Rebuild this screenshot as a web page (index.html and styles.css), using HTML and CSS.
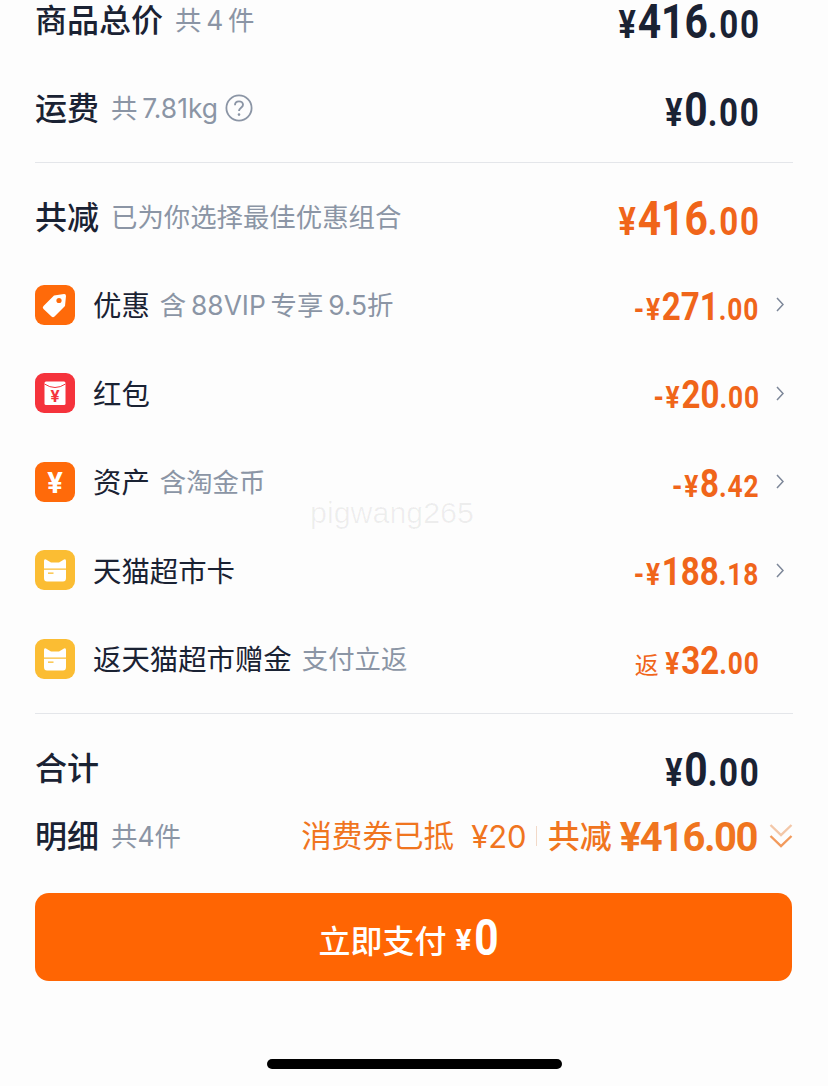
FILE: index.html
```html
<!DOCTYPE html>
<html lang="zh-CN">
<head>
    <meta charset="UTF-8">
    <meta name="viewport" content="width=device-width, initial-scale=1.0">
    <title>确认订单</title>
    <link rel="stylesheet" href="styles.css">
</head>
<body>
    <div class="page">
        <div class="row">
            <div class="left"><span class="title">商品总价</span><span class="sub">共&thinsp;4&thinsp;件</span></div>
            <div class="amount big"><span class="yen">¥</span><span class="int">416</span><span class="dec">.00</span></div>
            <div class="tail"></div>
        </div>
        <div class="row">
            <div class="left">
                <span class="title">运费</span><span class="sub">共&thinsp;7.81kg</span>
                <svg class="help" viewBox="0 0 28 28"><circle cx="14" cy="14" r="12.600" fill="none" stroke="#8b95a5" stroke-width="1.800"/><path d="M10 11.200c0-2.400 1.800-3.800 4-3.800s4 1.400 4 3.400c0 3-4 3-4 6.200" fill="none" stroke="#8b95a5" stroke-width="1.900"/><circle cx="14" cy="20.600" r="1.300" fill="#8b95a5"/></svg>
            </div>
            <div class="amount big"><span class="yen">¥</span><span class="int">0</span><span class="dec">.00</span></div>
            <div class="tail"></div>
        </div>

        <div class="divider"></div>

        <div class="row">
            <div class="left"><span class="title">共减</span><span class="sub">已为你选择最佳优惠组合</span></div>
            <div class="amount big orange"><span class="yen">¥</span><span class="int">416</span><span class="dec">.00</span></div>
            <div class="tail"></div>
        </div>

        <div class="row item">
            <div class="left">
                <svg class="icon" viewBox="0 0 40 40"><rect width="40" height="40" rx="9" fill="#ff6a0a"/><path d="M19 10.500L29 9Q31 8.800 31 11L30 21L19.500 31.500Q18 33 16.500 31.500L8.500 24Q7 22.500 8.500 21Z" fill="#fff"/><circle cx="24" cy="15.500" r="2.600" fill="#ff6a0a"/></svg>
                <span class="name">优惠</span><span class="sub">含&thinsp;88VIP&thinsp;专享&thinsp;9.5折</span>
            </div>
            <div class="amount orange"><span class="yen">-¥</span><span class="int">271</span><span class="dec">.00</span></div>
            <div class="tail"><svg class="arrow" viewBox="0 0 8 15"><path d="M1 1l6 6.500-6 6.500" fill="none" stroke="#7d8799" stroke-width="1.500"/></svg></div>
        </div>
        <div class="row item">
            <div class="left">
                <svg class="icon" viewBox="0 0 40 40"><rect width="40" height="40" rx="9" fill="#f5333c"/><rect x="9.500" y="8.500" width="21" height="23.500" rx="1.500" fill="#fff"/><path d="M9.500 11Q20 18 30.500 11" fill="none" stroke="#f5333c" stroke-width="1"/><text class="icon-yen" x="20" y="28.500" font-size="17">¥</text></svg>
                <span class="name">红包</span>
            </div>
            <div class="amount orange"><span class="yen">-¥</span><span class="int">20</span><span class="dec">.00</span></div>
            <div class="tail"><svg class="arrow" viewBox="0 0 8 15"><path d="M1 1l6 6.500-6 6.500" fill="none" stroke="#7d8799" stroke-width="1.500"/></svg></div>
        </div>
        <div class="row item">
            <div class="left">
                <svg class="icon" viewBox="0 0 40 40"><rect width="40" height="40" rx="9" fill="#ff6a0a"/><text class="icon-yen white" x="20" y="30.500" font-size="29">¥</text></svg>
                <span class="name">资产</span><span class="sub">含淘金币</span>
            </div>
            <div class="amount orange"><span class="yen">-¥</span><span class="int">8</span><span class="dec">.42</span></div>
            <div class="tail"><svg class="arrow" viewBox="0 0 8 15"><path d="M1 1l6 6.500-6 6.500" fill="none" stroke="#7d8799" stroke-width="1.500"/></svg></div>
        </div>
        <div class="row item">
            <div class="left">
                <svg class="icon" viewBox="0 0 40 40"><rect width="40" height="40" rx="9" fill="#fbbd33"/><path d="M9 11Q9 8.500 11 9.500L16 12.500H24L29 9.500Q31 8.500 31 11V18.500H9Z" fill="#fff"/><path d="M9 19.800H31V28Q31 31.500 28 31.500H12Q9 31.500 9 28Z" fill="#fff"/><rect x="13" y="22.500" width="5.500" height="1.300" fill="#fbbd33"/></svg>
                <span class="name">天猫超市卡</span>
            </div>
            <div class="amount orange"><span class="yen">-¥</span><span class="int">188</span><span class="dec">.18</span></div>
            <div class="tail"><svg class="arrow" viewBox="0 0 8 15"><path d="M1 1l6 6.500-6 6.500" fill="none" stroke="#7d8799" stroke-width="1.500"/></svg></div>
        </div>
        <div class="row item">
            <div class="left">
                <svg class="icon" viewBox="0 0 40 40"><rect width="40" height="40" rx="9" fill="#fbbd33"/><path d="M9 11Q9 8.500 11 9.500L16 12.500H24L29 9.500Q31 8.500 31 11V18.500H9Z" fill="#fff"/><path d="M9 19.800H31V28Q31 31.500 28 31.500H12Q9 31.500 9 28Z" fill="#fff"/><rect x="13" y="22.500" width="5.500" height="1.300" fill="#fbbd33"/></svg>
                <span class="name">返天猫超市赠金</span><span class="sub">支付立返</span>
            </div>
            <div class="amount orange"><span class="fan">返</span><span class="yen">¥</span><span class="int">32</span><span class="dec">.00</span></div>
            <div class="tail"></div>
        </div>

        <div class="divider"></div>

        <div class="row total">
            <div class="left"><span class="title">合计</span></div>
            <div class="amount big"><span class="yen">¥</span><span class="int">0</span><span class="dec">.00</span></div>
            <div class="tail"></div>
        </div>
        <div class="row detail">
            <div class="left"><span class="title">明细</span><span class="sub">共4件</span></div>
            <div class="summary">
                <span class="used">消费券已抵</span>
                <span class="used-num">¥20</span>
                <span class="bar"></span>
                <span class="saved">共减</span>
                <span class="saved-num">¥416.00</span>
                <svg class="double" viewBox="0 0 24 26"><path d="M1.500 2l10.500 10L22.500 2" fill="none" stroke="#f3c7a8" stroke-width="2.400"/><path d="M1.500 13l10.500 10L22.500 13" fill="none" stroke="#f29a5c" stroke-width="2.400"/></svg>
            </div>
        </div>

        <button class="pay"><span class="pay-text">立即支付</span><span class="pay-yen">¥</span><span class="pay-num">0</span></button>
        <div class="home-bar"></div>
    </div>
    <div class="watermark">pigwang265</div>
</body>
</html>
```

FILE: styles.css
```css
body {
    margin: 0;
    height: 1086px;
    overflow: hidden;
    position: relative;
    background-color: #fdfdfd;
    font-family: Inter, "Noto Sans CJK SC", sans-serif;
    color: #1a2233;
}

/* the view is scrolled, first row sits right under the top edge */
.page {
    margin-top: -25px;
    padding: 0 35px;
    display: flex;
    flex-direction: column;
}

.row {
    height: 88.5px;
    flex: none;
    display: flex;
    align-items: center;
    justify-content: space-between;
}

.left {
    display: flex;
    align-items: center;
    flex: 1;
}

.title {
    font-size: 32px;
    font-weight: 500;
    line-height: 36px;
    margin-top: 3px;
}

.name {
    font-size: 28.4px;
    line-height: 36px;
    margin: 3px 0 0 18px;
}

.sub {
    font-size: 26.4px;
    line-height: 36px;
    color: #8b95a5;
    margin: 1px 0 0 12px;
}

.item .sub {
    margin-left: 10px;
}

.help {
    width: 28px;
    height: 28px;
    margin-left: 7px;
}

.icon {
    width: 40px;
    height: 40px;
    flex: none;
}

.icon-yen {
    font-family: Roboto, sans-serif;
    font-weight: 700;
    text-anchor: middle;
    fill: #f5333c;
}

.icon-yen.white {
    fill: #fff;
}

/* amounts: the app uses a narrow digit font, Roboto squeezed comes close */
.amount {
    font-family: Roboto, sans-serif;
    font-weight: 700;
    line-height: 30px;
    white-space: nowrap;
    color: #1a2233;
    transform: translateY(6px) scaleX(0.85);
    transform-origin: right center;
}

.amount .yen {
    font-size: 31px;
    letter-spacing: 2px;
}

.amount .int {
    font-size: 39px;
}

.amount .dec {
    font-size: 31px;
    letter-spacing: 1px;
    margin-right: -2px;
}

.amount .fan {
    display: inline-block;
    margin: 0 10px 0 2px;
    font-family: "Noto Sans CJK SC", sans-serif;
    font-size: 24px;
    font-weight: 400;
    transform: scaleX(1.176);
}

.amount.big {
    transform: translateY(8px) scaleX(0.85);
}

.amount.big .yen {
    font-size: 38px;
}

.amount.big .int {
    font-size: 48px;
}

.amount.big .dec {
    font-size: 39px;
    letter-spacing: 2px;
    margin-right: -3px;
}

.amount.orange {
    color: #f0651a;
}

.tail {
    width: 35px;
    flex: none;
    display: flex;
    align-items: center;
    justify-content: flex-end;
    padding-right: 9px;
    box-sizing: border-box;
    height: 30px;
}

.arrow {
    width: 8px;
    height: 15px;
}

.divider {
    height: 1px;
    margin: 10px 0 9px;
    background-color: #e4e6ea;
    flex: none;
}

.row.total {
    margin-top: 14px;
    height: 60px;
}

.row.detail {
    height: 77px;
}

.summary {
    display: flex;
    align-items: center;
    color: #f0751f;
    white-space: nowrap;
}

.used {
    font-size: 30.6px;
    margin-top: -3px;
}

.used-num {
    font-size: 31px;
    margin: 1px 0 0 17px;
}

.bar {
    width: 1px;
    height: 20px;
    margin: 0 11px 0 9px;
    background-color: #f2d9c8;
}

.saved {
    font-size: 32px;
    font-weight: 500;
    margin-top: -3px;
}

.saved-num {
    font-family: Roboto, sans-serif;
    font-size: 40px;
    font-weight: 700;
    letter-spacing: -1.500px;
    margin: 4px 0 0 8px;
}

.double {
    width: 24px;
    height: 26px;
    margin-left: 12px;
}

.pay {
    height: 88px;
    margin: 19px 1px 0 0;
    flex: none;
    border: none;
    border-radius: 14px;
    background-color: #ff6503;
    color: #fff;
    font-family: inherit;
    font-size: 32px;
    font-weight: 500;
    display: flex;
    align-items: center;
    justify-content: center;
}

.pay-text {
    margin-top: 3px;
}

.pay-yen {
    font-family: Roboto, sans-serif;
    font-weight: 700;
    font-size: 30px;
    margin: 5px 0 0 9px;
}

.pay-num {
    display: inline-block;
    font-family: Roboto, sans-serif;
    font-weight: 700;
    font-size: 50px;
    line-height: 50px;
    margin: 2px 8px 0 0;
    transform: scaleX(0.85);
}

.home-bar {
    width: 295px;
    height: 10px;
    margin: 78px auto 0;
    border-radius: 5px;
    background-color: #000;
    flex: none;
}

.watermark {
    position: absolute;
    left: 310px;
    top: 495px;
    font-family: "Liberation Sans", sans-serif;
    font-size: 30.400px;
    color: rgba(0, 0, 0, 0.06);
}
```
